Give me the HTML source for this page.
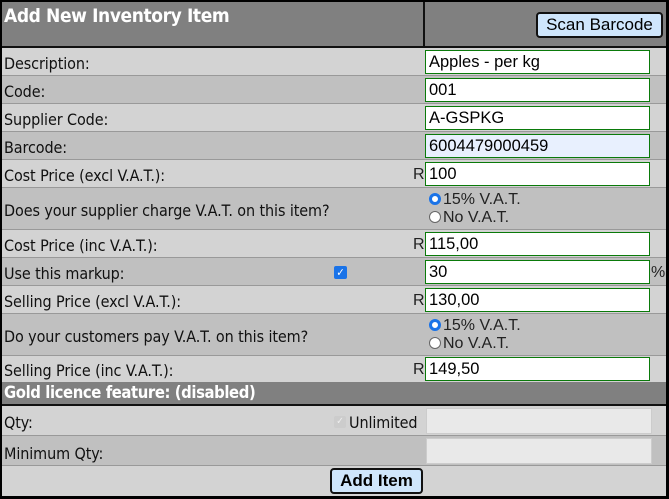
<!DOCTYPE html>
<html><head><style>
body{margin:0;width:669px;height:499px;overflow:hidden;background:#000;font-family:"DejaVu Sans Condensed","Liberation Sans",sans-serif;}
#w{position:absolute;left:2px;top:2px;width:664px;height:494px;background:#d3d3d3;}
.r{position:absolute;left:0;width:664px;border-bottom:1px solid #999;box-sizing:border-box;}
.l{background:#d3d3d3}.d{background:#c0c0c0}
.lab{position:absolute;left:2px;font-size:16px;color:#111;letter-spacing:-0.1px;}
.in{position:absolute;left:423px;width:225px;height:24px;box-sizing:border-box;border:1px solid #0a7a0a;background:#fff;font-family:"Liberation Sans",sans-serif;font-size:16.5px;padding-left:3px;line-height:22px;color:#000}
.R{position:absolute;left:411px;font-family:"Liberation Sans",sans-serif;font-size:16px;color:#222}
.rad{position:absolute;left:427px;font-family:"Liberation Sans",sans-serif;font-size:16px;color:#222;line-height:18px}
.o{display:inline-block;width:12px;height:12px;border-radius:50%;border:1px solid #666;background:#fff;vertical-align:-1px;margin-right:2px;box-sizing:border-box}
.o.on{border:3px solid #1a73e8;background:#fff}
.dis{position:absolute;left:424px;width:226px;height:26px;box-sizing:border-box;border:1px solid #ccc;background:#e9e9e9}
.btn{position:absolute;box-sizing:border-box;border:2px solid #111;border-radius:4px;background:#cfe6fc;font-family:"Liberation Sans",sans-serif;color:#000;text-align:center}
</style></head><body><div id="w">
<div style="position:absolute;left:0;top:0;width:421px;height:44px;background:#808080"></div>
<div style="position:absolute;left:421px;top:0;width:2px;height:44px;background:#111"></div>
<div style="position:absolute;left:423px;top:0;width:241px;height:44px;background:#808080"></div>
<div style="position:absolute;left:0;top:44px;width:664px;height:2px;background:#111"></div>
<div style="position:absolute;left:2px;top:3px;color:#fff;font-weight:bold;font-size:19px;letter-spacing:-0.4px">Add New Inventory Item</div>
<div class="btn" style="left:534px;top:10px;width:127px;height:26px;font-size:17px;line-height:22px">Scan Barcode</div>

<div class="r l" style="top:46px;height:28px"><span class="lab" style="top:6px">Description:</span><div class="in" style="top:2px">Apples - per kg</div></div>
<div class="r d" style="top:74px;height:28px"><span class="lab" style="top:6px">Code:</span><div class="in" style="top:2px">001</div></div>
<div class="r l" style="top:102px;height:28px"><span class="lab" style="top:6px">Supplier Code:</span><div class="in" style="top:2px">A-GSPKG</div></div>
<div class="r d" style="top:130px;height:28px"><span class="lab" style="top:6px">Barcode:</span><div class="in" style="top:2px;background:#e8f0fe">6004479000459</div></div>
<div class="r l" style="top:158px;height:28px"><span class="lab" style="top:6px">Cost Price (excl V.A.T.):</span><span class="R" style="top:6px">R</span><div class="in" style="top:2px">100</div></div>
<div class="r d" style="top:186px;height:42px"><span class="lab" style="top:13px">Does your supplier charge V.A.T. on this item?</span><div class="rad" style="top:3px"><span class="o on"></span>15% V.A.T.<br><span class="o"></span>No V.A.T.</div></div>
<div class="r l" style="top:228px;height:28px"><span class="lab" style="top:6px">Cost Price (inc V.A.T.):</span><span class="R" style="top:6px">R</span><div class="in" style="top:2px">115,00</div></div>
<div class="r d" style="top:256px;height:28px"><span class="lab" style="top:6px">Use this markup:</span><span style="position:absolute;left:332px;top:8px;width:13px;height:13px;background:#1a73e8;border-radius:2px;color:#fff;font-size:11px;line-height:13px;text-align:center">✓</span><div class="in" style="top:2px">30</div><span class="R" style="left:649px;top:6px">%</span></div>
<div class="r l" style="top:284px;height:28px"><span class="lab" style="top:6px">Selling Price (excl V.A.T.):</span><span class="R" style="top:6px">R</span><div class="in" style="top:2px">130,00</div></div>
<div class="r d" style="top:312px;height:42px"><span class="lab" style="top:13px">Do your customers pay V.A.T. on this item?</span><div class="rad" style="top:3px"><span class="o on"></span>15% V.A.T.<br><span class="o"></span>No V.A.T.</div></div>
<div class="r l" style="top:354px;height:26px;border:none"><span class="lab" style="top:5px">Selling Price (inc V.A.T.):</span><span class="R" style="top:5px">R</span><div class="in" style="top:1px">149,50</div></div>
<div style="position:absolute;left:0;top:380px;width:664px;height:22px;background:#808080;border-bottom:2px solid #111"><span style="position:absolute;left:2px;top:1px;color:#fff;font-weight:bold;font-size:16.5px;letter-spacing:-0.4px">Gold licence feature: (disabled)</span></div>
<div class="r l" style="top:404px;height:30px"><span class="lab" style="top:7px">Qty:</span><span style="position:absolute;left:332px;top:10px;width:12px;height:12px;background:#ccc;border-radius:2px;color:#eee;font-size:10px;line-height:12px;text-align:center">✓</span><span class="lab" style="left:347px;top:7px">Unlimited</span><div class="dis" style="top:2px"></div></div>
<div class="r d" style="top:434px;height:30px"><span class="lab" style="top:8px">Minimum Qty:</span><div class="dis" style="top:2px"></div></div>
<div class="r l" style="top:464px;height:30px;border:none"><div class="btn" style="left:328px;top:2px;width:93px;height:26px;font-size:17px;font-weight:bold;line-height:22px">Add Item</div></div>
</div></body></html>
